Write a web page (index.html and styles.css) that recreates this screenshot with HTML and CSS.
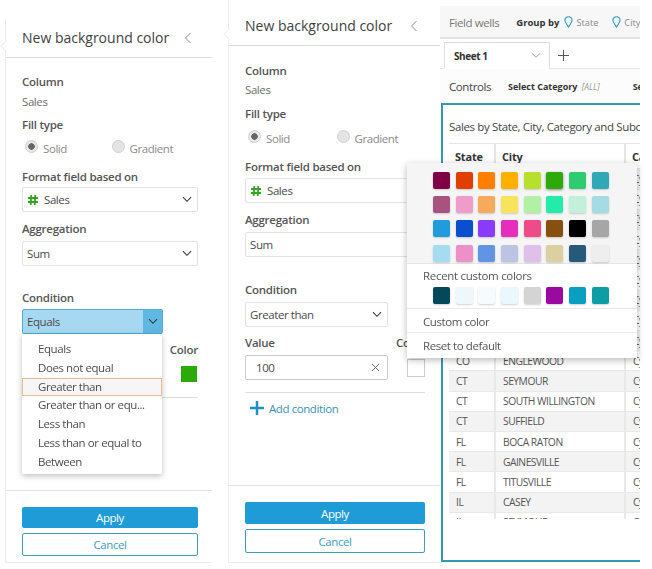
FILE: index.html
```html
<!DOCTYPE html>
<html lang="en">
<head>
<meta charset="utf-8">
<title>New background color</title>
<link rel="stylesheet" href="styles.css">
</head>
<body>
<main class="stage">

  <section class="panel panel-a">
    <header class="panel-head"><h2>New background color</h2><svg class="back" viewBox="0 0 8 12"><path d="M6.5 1 1.5 6l5 5"/></svg></header>
    <div class="panel-body">
      <h3 class="label l-column">Column</h3>
      <p class="static">Sales</p>
      <h3 class="label l-fill">Fill type</h3>
      <div class="radios">
        <span class="radio"><i class="dot on"></i>Solid</span>
        <span class="radio"><i class="dot"></i>Gradient</span>
      </div>
      <h3 class="label l-format">Format field based on</h3>
      <div class="select s-format"><svg class="hash" viewBox="0 0 12 12"><path d="M4.300 1 3.700 11M8.300 1 7.700 11M1 4h10M1 8h10"/></svg><span>Sales</span><svg class="chev" viewBox="0 0 12 8"><path d="M1 1.500 6 6.500l5-5"/></svg></div>
      <h3 class="label l-agg">Aggregation</h3>
      <div class="select s-agg"><span>Sum</span><svg class="chev" viewBox="0 0 12 8"><path d="M1 1.500 6 6.500l5-5"/></svg></div>
      <h3 class="label l-cond">Condition</h3>
      <div class="select select-open"><span>Equals</span><b class="open-arrow"><svg class="chev" viewBox="0 0 12 8"><path d="M1 1.500 6 6.500l5-5"/></svg></b></div>
      <div class="color-col"><h3 class="label">Color</h3><i class="swatch-green"></i></div>
      <div class="rule rule-a"></div>
    </div>
    <ul class="menu">
      <li>Equals</li>
      <li>Does not equal</li>
      <li class="hover">Greater than</li>
      <li>Greater than or equ...</li>
      <li>Less than</li>
      <li>Less than or equal to</li>
      <li>Between</li>
    </ul>
    <footer class="panel-foot">
      <button class="btn primary">Apply</button>
      <button class="btn ghost">Cancel</button>
    </footer>
  </section>

  <section class="panel panel-b">
    <header class="panel-head"><h2>New background color</h2><svg class="back" viewBox="0 0 8 12"><path d="M6.500 1 1.500 6l5 5"/></svg></header>
    <div class="panel-body">
      <h3 class="label l-column">Column</h3>
      <p class="static">Sales</p>
      <h3 class="label l-fill">Fill type</h3>
      <div class="radios">
        <span class="radio"><i class="dot on"></i>Solid</span>
        <span class="radio"><i class="dot"></i>Gradient</span>
      </div>
      <h3 class="label l-format">Format field based on</h3>
      <div class="select s-format"><svg class="hash" viewBox="0 0 12 12"><path d="M4.300 1 3.700 11M8.300 1 7.700 11M1 4h10M1 8h10"/></svg><span>Sales</span></div>
      <h3 class="label l-agg">Aggregation</h3>
      <div class="select s-agg"><span>Sum</span></div>
      <h3 class="label l-cond">Condition</h3>
      <div class="select narrow"><span>Greater than</span><svg class="chev" viewBox="0 0 12 8"><path d="M1 1.500 6 6.500l5-5"/></svg></div>
      <div class="value-row">
        <div class="value-col">
          <h3 class="label">Value</h3>
          <div class="select input"><span>100</span><svg class="clear" viewBox="0 0 10 10"><path d="M1 1l8 8M9 1 1 9"/></svg></div>
        </div>
        <div class="color-b"><h3 class="label">Color</h3><i class="swatch-empty"></i></div>
      </div>
      <div class="rule rule-b"></div>
      <div class="add"><svg viewBox="0 0 14 14"><path d="M7 0v14M0 7h14"/></svg>Add condition</div>
    </div>
    <footer class="panel-foot">
      <button class="btn primary">Apply</button>
      <button class="btn ghost">Cancel</button>
    </footer>
  </section>

  <section class="analysis">
    <div class="wells">
      <span class="wells-name">Field wells</span>
      <b>Group by</b>
      <span class="pin"><svg viewBox="0 0 10 13"><path d="M5 12C3 9 1 7 1 4.600a4 4 0 0 1 8 0C9 7 7 9 5 12z"/></svg>State</span>
      <span class="pin"><svg viewBox="0 0 10 13"><path d="M5 12C3 9 1 7 1 4.600a4 4 0 0 1 8 0C9 7 7 9 5 12z"/></svg>City</span>
    </div>
    <div class="tabs">
      <div class="tab"><b>Sheet 1</b><svg viewBox="0 0 12 8"><path d="M1 1.500 6 6.500l5-5"/></svg></div>
      <svg class="plus" viewBox="0 0 12 12"><path d="M6 0v12M0 6h12"/></svg>
    </div>
    <div class="controls">
      <span class="controls-name">Controls</span>
      <span class="control"><b>Select Category</b> <em>[ALL]</em></span>
      <span class="control"><b>Select</b></span>
    </div>
    <div class="visual">
      <div class="visual-title">Sales by State, City, Category and Subcategory</div>
      <div class="table-clip">
        <table>
          <thead><tr><th>State</th><th>City</th><th>Category</th></tr></thead>
          <tbody>
            <tr><td></td><td></td><td>Cy</td></tr>
            <tr><td></td><td></td><td>Cy</td></tr>
            <tr><td></td><td></td><td>Cy</td></tr>
            <tr><td></td><td></td><td>Cy</td></tr>
            <tr><td></td><td></td><td>Cy</td></tr>
            <tr><td></td><td></td><td>Cy</td></tr>
            <tr><td></td><td></td><td>Cy</td></tr>
            <tr><td></td><td></td><td>Cy</td></tr>
            <tr><td></td><td></td><td>Cy</td></tr>
            <tr><td>CO</td><td>ENGLEWOOD</td><td>Cy</td></tr>
            <tr><td>CT</td><td>SEYMOUR</td><td>Cy</td></tr>
            <tr><td>CT</td><td>SOUTH WILLINGTON</td><td>Cy</td></tr>
            <tr><td>CT</td><td>SUFFIELD</td><td>Cy</td></tr>
            <tr><td>FL</td><td>BOCA RATON</td><td>Cy</td></tr>
            <tr><td>FL</td><td>GAINESVILLE</td><td>Cy</td></tr>
            <tr><td>FL</td><td>TITUSVILLE</td><td>Cy</td></tr>
            <tr><td>IL</td><td>CASEY</td><td>Cy</td></tr>
            <tr><td>IL</td><td>SEYMOUR</td><td>Cy</td></tr>
          </tbody>
        </table>
      </div>
    </div>
  </section>

  <aside class="picker">
    <div class="palette">
      <i class="c11"></i><i class="c12"></i><i class="c13"></i><i class="c14"></i><i class="c15"></i><i class="c16 picked"></i><i class="c17"></i><i class="c18"></i>
      <i class="c21"></i><i class="c22"></i><i class="c23"></i><i class="c24"></i><i class="c25"></i><i class="c26"></i><i class="c27"></i><i class="c28"></i>
      <i class="c31"></i><i class="c32"></i><i class="c33"></i><i class="c34"></i><i class="c35"></i><i class="c36"></i><i class="c37"></i><i class="c38"></i>
      <i class="c41"></i><i class="c42"></i><i class="c43"></i><i class="c44"></i><i class="c45"></i><i class="c46"></i><i class="c47"></i><i class="c48"></i>
    </div>
    <div class="recent">
      <div class="recent-title">Recent custom colors</div>
      <div class="palette-row">
        <i class="r1"></i><i class="r2"></i><i class="r3"></i><i class="r4"></i><i class="r5"></i><i class="r6"></i><i class="r7"></i><i class="r8"></i>
      </div>
    </div>
    <div class="picker-item">Custom color</div>
    <div class="picker-item">Reset to default</div>
  </aside>
</main>
</body>
</html>
```
FILE: styles.css
```css
* { box-sizing: border-box; }
html, body { margin: 0; padding: 0; background: #fff; }
body { font-family: "Open Sans", "Noto Sans", sans-serif; color: #444; font-size: 11.500px; letter-spacing: -.42px; }
h2, h3, p, ul { margin: 0; padding: 0; }
.stage { position: relative; display: flex; width: 652px; height: 569px; overflow: hidden; align-items: flex-start; filter: blur(.3px); }

.panel { position: relative; display: flex; flex-direction: column; background: #fff; border-left: 1px solid #ececec; }
.panel::before { content: ""; position: absolute; left: -4px; width: 7px; height: 7px; background: #fff; border: 1px solid #efefef; border-width: 0 0 1px 1px; transform: rotate(45deg); }
.panel-a { width: 207px; height: 544px; margin: 19px 0 0 5px; border-bottom: 1px solid #ececec; }
.panel-a::before { top: 23px; }
.panel-b { width: 212px; height: 563px; margin: 0 0 0 16px; border-bottom: 1px solid #ececec; }
.panel-b::before { top: 30px; }
.panel-head { display: flex; align-items: center; justify-content: space-between; flex: none; height: 39px; padding: 0 20px 0 16px; border-bottom: 1px solid #dcdcdc; }
.panel-a .panel-head { padding-bottom: 1px; }
.panel-b .panel-head { height: 46px; padding: 6px 22px 0 16px; }
.panel-head h2 { font-size: 14px; font-weight: 400; letter-spacing: 0; color: #3f3f3f; }
.back { width: 8px; height: 12px; fill: none; stroke: #888; stroke-width: 1; }
.panel-body { flex: 1; padding: 0 14px 0 16px; }
.panel-b .panel-body { padding-right: 15px; }

.label { font-size: 11.500px; line-height: 16px; font-weight: 600; color: #555; letter-spacing: -.25px; }
.l-column { margin-top: 17px; }
.l-fill { margin-top: 8px; }
.l-format { margin-top: 10px; }
.l-agg { margin-top: 9px; }
.l-cond { margin-top: 25px; }
.static { line-height: 16px; color: #6d6d6d; margin-top: 3px; }
.radios { display: flex; align-items: center; height: 22px; margin-top: 5px; padding-left: 3px; color: #8a8a8a; }
.radio { display: flex; align-items: center; width: 89.500px; gap: 5px; }
.dot { width: 13px; height: 13px; border-radius: 50%; background: #e4e4e4; border: 1px solid #cfcfcf; position: relative; top: -2px; }
.dot.on { background: radial-gradient(circle, #666 0 3px, #e8e8e8 3.500px); }

.select { display: flex; align-items: center; height: 25px; padding: 0 5px 0 4px; border: 1px solid #e2e2e2; border-radius: 2px; background: #fff; color: #4a4a4a; }
.select span { flex: 1; }
.s-format { margin-top: 3px; }
.s-agg { margin-top: 4px; }
.hash { width: 12px; height: 12px; margin-right: 5px; fill: none; stroke: #35a422; stroke-width: 1.800; flex: none; }
.chev { width: 10px; height: 6.500px; fill: none; stroke: #333; stroke-width: 1.300; flex: none; }

.panel-a .l-column { margin-top: 16px; }
.panel-a .static { margin-top: 4px; }
.panel-a .l-fill { margin-top: 7px; }
.panel-a .radios { margin-top: 4px; }
.panel-a .s-format { margin-top: 2px; }
.panel-a .l-cond { margin-top: 24px; }

.select-open { width: 141px; margin-top: 3px; padding: 0 0 0 4px; background: #a6d9f1; border-color: #4eaed9; }
.open-arrow { display: flex; align-items: center; justify-content: center; width: 19px; height: 23px; background: #5fb8e2; }
.color-col { margin-top: 8px; text-align: right; }
.swatch-green { display: block; width: 16px; height: 16px; margin: 8px 1px 0 auto; background: #2caa0a; }
.rule { height: 1px; background: #ddd; }
.rule-a { margin-top: 15px; }
.rule-b { margin-top: 12px; }

.menu { position: absolute; left: 16px; top: 315px; width: 140px; height: 140px; padding: 6px 0; list-style: none; background: #fff; box-shadow: 0 2px 6px rgba(0,0,0,.25); z-index: 2; }
.menu li { height: 18.800px; line-height: 18.800px; padding-left: 16px; color: #4d4d4d; white-space: nowrap; }
.menu li.hover { background: #f6f6f6; box-shadow: inset 0 0 0 1px #efb98e; }

.panel-foot { flex: none; padding: 16px 14px 0 16px; border-top: 1px solid #e3e3e3; display: flex; flex-direction: column; gap: 5px; }
.panel-a .panel-foot { height: 72px; }
.panel-b .panel-foot { height: 77px; padding-right: 15px; }
.btn { display: block; width: 100%; height: 22px; padding: 0; border-radius: 2px; font: 400 11.500px "Open Sans", sans-serif; letter-spacing: -.42px; }
.primary { background: #1f9cd8; border: 0; color: #fff; }
.ghost { height: 24px; background: #fff; border: 1.500px solid #3f9db8; color: #3a9bbd; }
.panel-a .primary { height: 21px; }
.panel-a .ghost { height: 23px; }

.narrow { width: 143px; margin-top: 4px; }
.value-row { display: flex; justify-content: space-between; margin-top: 8px; }
.value-col { width: 143px; }
.input { margin-top: 4px; padding: 0 7px 0 10px; border-color: #ccc; }
.clear { width: 9px; height: 9px; fill: none; stroke: #666; stroke-width: 1.100; }
.color-b { width: 29px; }
.swatch-empty { display: block; width: 18px; height: 18px; margin: 8px 0 0 auto; border: 1px solid #ccc; background: #fff; }
.add { display: flex; align-items: center; gap: 5px; height: 18px; margin: 6px 0 0 5px; color: #3a93b5; }
.add svg { width: 14px; height: 14px; fill: none; stroke: #1f8fc4; stroke-width: 2.500; }

.analysis { width: 200px; height: 558px; margin-top: 6px; overflow: hidden; flex: none; }
.wells { display: flex; align-items: center; height: 33px; padding: 1px 0 0 9px; background: #f7f7f7; border-bottom: 2px solid #e2e2e2; white-space: nowrap; font-size: 9.500px; letter-spacing: 0; }
.wells-name { font-size: 11.500px; letter-spacing: -.42px; color: #777; margin-right: 17px; }
.wells b { color: #333; font-weight: 700; margin-right: 5px; }
.pin { display: flex; align-items: center; gap: 3px; color: #888; margin-right: 14px; font-size: 9.200px; }
.pin svg { width: 9px; height: 12px; fill: none; stroke: #2d9bc4; stroke-width: 1.200; }
.tabs { display: flex; align-items: flex-end; height: 30px; background: #fff; border-bottom: 1px solid #e6e6e6; padding-left: 4px; }
.tab { display: flex; align-items: center; justify-content: space-between; width: 106px; height: 27px; margin-bottom: -1px; padding: 0 8px 0 9px; background: #fff; border: 1px solid #dedede; border-bottom-color: #fff; font-size: 10px; color: #333; }
.tab svg { width: 10px; height: 6.500px; fill: none; stroke: #888; stroke-width: 1; }
.plus { width: 11px; height: 11px; margin: 0 0 7px 8px; fill: none; stroke: #555; stroke-width: 1.100; }
.controls { display: flex; align-items: center; height: 34px; padding-left: 9px; background: #fcfcfc; white-space: nowrap; font-size: 9px; letter-spacing: 0; color: #333; }
.controls-name { font-size: 11.500px; letter-spacing: -.42px; color: #444; margin-right: 17px; }
.control { margin-right: 33px; }
.control em { color: #999; font-size: 8.500px; margin-left: 2px; }
.visual { width: 230px; height: 459px; margin-left: 1px; border: 2px solid #2f9bac; border-width: 2px 0 2px 2px; padding: 14px 0 0 6px; background: #fff; }
.visual-title { line-height: 16px; color: #444; white-space: nowrap; letter-spacing: -.36px; }
.table-clip { width: 230px; height: 376px; margin-top: 8px; overflow: hidden; }
table { width: 230px; table-layout: fixed; border-collapse: collapse; font-size: 10.300px; letter-spacing: -.5px; color: #555; }
th:nth-child(1), td:nth-child(1) { width: 46px; }
th:nth-child(2), td:nth-child(2) { width: 130px; }
th { height: 25.500px; padding: 0 0 0 6px; text-align: left; font-size: 11px; letter-spacing: -.2px; font-weight: 700; color: #333; border: 1px solid #e6e6e6; border-width: 1px 2px 2px 0; }
td { height: 20.200px; padding: 0 0 0 7px; border-right: 2px solid #e9e9e9; border-bottom: 1px solid #e9e9e9; white-space: nowrap; overflow: hidden; }
tbody tr:nth-child(odd) td { background: #f3f3f3; }
tbody tr:nth-child(even) td { background: #fff; }

.picker { position: absolute; left: 407px; top: 163px; width: 230px; height: 195px; background: #fff; box-shadow: 0 2px 7px rgba(0,0,0,.28); z-index: 3; color: #555; }
.palette { display: grid; grid-template-columns: repeat(8, 17px); column-gap: 5.700px; row-gap: 5.700px; height: 101px; padding: 9px 0 0 26px; background: #f5f5f5; border-bottom: 1px solid #e6e6e6; }
.palette-row { display: grid; grid-template-columns: repeat(8, 17px); column-gap: 5.700px; padding-left: 26px; margin-top: 2px; }
.palette i, .palette-row i { display: block; width: 17px; height: 17px; border-radius: 2px; box-shadow: 0 1px 2px rgba(0,0,0,.18); }
.palette .picked { box-shadow: 0 1px 3px rgba(0,0,0,.45); }
.recent { height: 45px; padding: 3px 0 0 16px; border-bottom: 1px solid #e8e8e8; }
.recent .palette-row { margin-left: -16px; }
.recent-title { line-height: 18px; letter-spacing: -.3px; }
.picker-item { height: 24px; line-height: 25px; padding-left: 16px; border-bottom: 1px solid #ececec; }
.picker-item:last-child { border-bottom: 0; }

.c11 { background: #7f0045; } .c12 { background: #e13f00; } .c13 { background: #ff8000; } .c14 { background: #ffb000; }
.c15 { background: #b6e02d; } .c16 { background: #2caa0a; } .c17 { background: #2ecb71; } .c18 { background: #2fa9b5; }
.c21 { background: #a8537f; } .c22 { background: #f09cc9; } .c23 { background: #f7a95c; } .c24 { background: #f8e35c; }
.c25 { background: #b2f0a6; } .c26 { background: #24ebaa; } .c27 { background: #c3f0d8; } .c28 { background: #a5dce3; }
.c31 { background: #209bdc; } .c32 { background: #0a4fd0; } .c33 { background: #8a3bfb; } .c34 { background: #e52fbb; }
.c35 { background: #ee4c88; } .c36 { background: #87500f; } .c37 { background: #000; } .c38 { background: #a6a6a6; }
.c41 { background: #a5dcf0; } .c42 { background: #ee90c8; } .c43 { background: #5f95e3; } .c44 { background: #bcc3e3; }
.c45 { background: #e0c0ea; } .c46 { background: #dccfa0; } .c47 { background: #265a78; } .c48 { background: #eeeeee; }
.r1 { background: #03495a; } .r2 { background: #eef8fc; } .r3 { background: #f6fbfe; } .r4 { background: #eaf7fd; }
.r5 { background: #d4d4d4; } .r6 { background: #9a0aa0; } .r7 { background: #0a9ec0; } .r8 { background: #0f9da5; }
```
